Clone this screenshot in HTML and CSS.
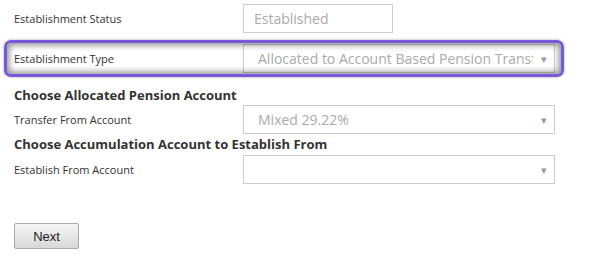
FILE: index.html
```html
<!DOCTYPE html>
<html lang="en">
<head>
    <meta charset="UTF-8">
    <meta name="viewport" content="width=device-width, initial-scale=1.0">
    <title>Establish Pension</title>
    <link rel="stylesheet" href="styles.css">
</head>
<body>
    <div class="form">
        <div class="row">
            <label class="label">Establishment Status</label>
            <div class="input">Established</div>
        </div>

        <div class="highlight">
            <div class="row">
                <label class="label">Establishment Type</label>
                <div class="select"><span class="value">Allocated to Account Based Pension Transfer</span></div>
            </div>
        </div>

        <h2 class="heading first">Choose Allocated Pension Account</h2>
        <div class="row">
            <label class="label">Transfer From Account</label>
            <div class="select"><span class="value">Mixed 29.22%</span></div>
        </div>

        <h2 class="heading">Choose Accumulation Account to Establish From</h2>
        <div class="row">
            <label class="label">Establish From Account</label>
            <div class="select"><span class="value"></span></div>
        </div>

        <button class="btn">Next</button>
    </div>
</body>
</html>
```

FILE: styles.css
```css
body {
    margin: 0;
    font-family: "Open Sans", Arial, sans-serif;
    color: #333;
    background: #fff;
}
.form {
    padding: 4px 0 0 14px;
    width: 541px;
}
.row {
    display: grid;
    grid-template-columns: 229px 312px;
    align-items: center;
    height: 29px;
}
.label {
    font-size: 11px;
    color: #333;
}
.input, .select {
    box-sizing: border-box;
    height: 29px;
    border: 1px solid #ccc;
    background: #fff;
    color: #aaa;
    font-size: 14px;
    line-height: 27px;
    white-space: nowrap;
}
.input {
    width: 150px;
    padding-left: 10px;
}
.select {
    position: relative;
    padding: 0 21px 0 14px;
}
.select .value {
    display: block;
    overflow: hidden;
    height: 27px;
}
.select::after {
    content: "\25BE";
    position: absolute;
    right: 7px;
    top: 0;
    font-size: 11px;
    color: #999;
}
.highlight {
    position: relative;
    margin: 7px 0 0 -10px;
    padding: 1px 3px 0 7px;
    border: 3px solid #7658d8;
    border-radius: 7px;
    height: 30px;
    overflow: hidden;
    width: 544px;
    box-shadow: 0 0 3px rgba(0, 0, 0, 0.35);
}
.highlight::after {
    content: "";
    position: absolute;
    inset: 0;
    border-radius: 4px;
    box-shadow: inset 0 0 6px 2px rgba(0, 0, 0, 0.45);
    pointer-events: none;
}
.heading {
    margin: 1px 0 2px;
    font-size: 13px;
    font-weight: bold;
    line-height: 18px;
    color: #333;
}
.heading.first {
    margin: 9px 0 1px;
}
.btn {
    margin-top: 39px;
    width: 65px;
    height: 26px;
    border: 1px solid #aaa;
    border-radius: 2px;
    background: linear-gradient(#f6f6f6, #d8d8d8);
    font-family: Arial, "Liberation Sans", sans-serif;
    font-size: 13px;
    color: #222;
    padding: 0;
}
```
